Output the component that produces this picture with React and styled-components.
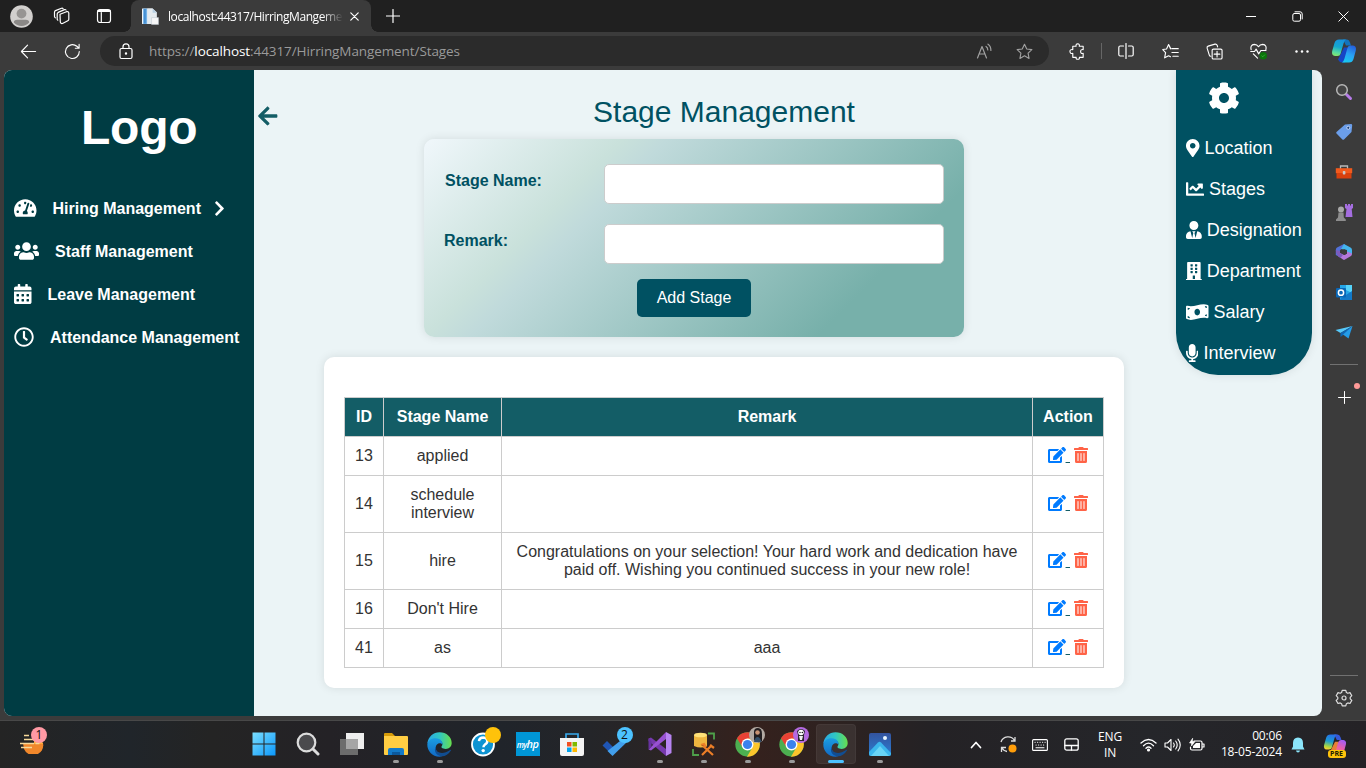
import React from "react";
import styled, { createGlobalStyle } from "styled-components";
import {
  FaTachometerAlt, FaUsers, FaCalendarAlt, FaRegClock, FaChevronRight, FaArrowLeft, FaCog,
  FaMapMarkerAlt, FaChartLine, FaUserTie, FaBuilding, FaMoneyBillWave, FaMicrophone, FaEdit, FaTrashAlt,
} from "react-icons/fa";

const Global = createGlobalStyle`
  * { box-sizing: border-box; }
  body { margin: 0; background: #3b3b3b; overflow: hidden; font-family: "Liberation Sans", Arial, sans-serif; }
  svg { display: block; flex: none; }
`;

const UI_FONT = `"Open Sans", "Noto Sans", sans-serif`;

const Screen = styled.div`
  width: 1366px; height: 768px; display: flex; flex-direction: column; background: #3b3b3b; overflow: hidden;
`;

/* ---------- browser chrome ---------- */
const TabStrip = styled.header`
  height: 32px; background: #202020; display: flex; align-items: stretch; color: #fff; font-family: ${UI_FONT};
`;
const Slot = styled.div`
  width: ${(p) => p.$w}px; flex: none; display: flex; align-items: center; justify-content: center;
`;
const Tab = styled.div`
  width: 240px; background: #3b3b3b; border-radius: 8px 8px 0 0; display: flex; align-items: center;
  padding-left: 11px; position: relative;
  &::before, &::after {
    content: ""; position: absolute; bottom: 0; width: 7px; height: 7px;
  }
  &::before { left: -7px; background: radial-gradient(circle at 0 0, transparent 6.5px, #3b3b3b 7px); }
  &::after { right: -7px; background: radial-gradient(circle at 100% 0, transparent 6.5px, #3b3b3b 7px); }
`;
const TabTitle = styled.span`
  width: 176px; margin-left: 9px; margin-right: -3px; font-size: 12px; letter-spacing: -0.42px; white-space: nowrap;
  mask-image: linear-gradient(90deg, #000 154px, transparent 175px);
`;
const Spacer = styled.div`flex: 1;`;
const Toolbar = styled.div`
  height: 38px; background: #3b3b3b; display: flex; align-items: center; color: #fff; flex: none;
`;
const AddressBar = styled.div`
  width: 949px; height: 30px; border-radius: 15px; background: #2b2b2b; display: flex; align-items: center;
  margin-left: 6px; padding: 0 5px 0 6px; font-family: ${UI_FONT};
`;
const Url = styled.span`
  margin-left: 3px; font-size: 13.5px; letter-spacing: -0.09px; color: #9a9a9a; white-space: nowrap;
  b { font-weight: 400; color: #fff; }
`;
const Divider = styled.div`
  width: 1px; height: 16px; background: #666; margin: 0 1px 0 2px;
`;

/* ---------- page ---------- */
const Body = styled.div`
  height: 646px; display: flex; padding-left: 4px; flex: none;
`;
const Page = styled.div`
  width: 1318px; height: 646px; border-radius: 8px; overflow: hidden; background: #ebf4f6; display: flex;
`;
/* Font Awesome glyph drawn at its natural aspect ratio */
const Glyph = styled.i`
  display: ${(p) => (p.$inline ? "inline-block" : "block")}; flex: none;
  width: ${(p) => p.$w}px; height: ${(p) => p.$h}px; color: ${(p) => p.$c || "inherit"};
  vertical-align: -2px; margin-bottom: ${(p) => p.$lift || 0}px;
  svg { width: 100%; height: 100%; }
`;
const SideNav = styled.nav`
  width: 250px; background: #003c43; color: #fff; flex: none;
`;
const Logo = styled.div`
  font-size: 48px; font-weight: 700; line-height: 55px; padding: 30px 0 0 77px; height: 117px; letter-spacing: -0.2px;
`;
const NavItem = styled.a`
  display: flex; align-items: center; height: 43px; padding-left: 10px; font-size: 16px; font-weight: 700; white-space: nowrap;
  span { margin: 0 13px 0 16px; }
`;
const Main = styled.main`
  flex: 1; display: flex; align-items: flex-start;
`;
const Back = styled.div`
  width: 70px; padding: 35px 0 0 4px; color: #135d66; flex: none;
`;
const Content = styled.section`
  width: 800px; display: flex; flex-direction: column; align-items: center;
`;
const Title = styled.h2`
  margin: 24px 0 10px; font-size: 30px; line-height: 35px; font-weight: 400; color: #005162;
`;
const Form = styled.form`
  width: 540px; height: 198px; padding: 25px 20px 0; border-radius: 10px; margin-left: -60px;
  background: linear-gradient(135deg, #f0f7fb 0%, #c9e1db 27%, #c0dadb 33%, #77b0aa 80%);
  box-shadow: 0 0 10px rgba(0, 0, 0, 0.1);
`;
const Field = styled.label`
  display: flex; justify-content: space-between; height: 40px; margin-bottom: 20px;
  font-size: 16px; font-weight: 700; line-height: 18px; color: #005162;
  span { padding-top: 8px; padding-left: ${(p) => p.$indent}px; }
`;
const Input = styled.input`
  width: 340px; height: 40px; border: 1px solid #ccc; border-radius: 5px; background: #fff; padding: 10px;
`;
const Submit = styled.button`
  display: block; margin: -5px auto 0; width: 114px; height: 38px; border: 0; border-radius: 5px; background: #005162;
  color: #fff; font: 16px "Liberation Sans", Arial, sans-serif;
`;
const Card = styled.div`
  width: 800px; height: 331px; margin-top: 20px; padding: 40px 20px 20px; background: #fff; border-radius: 10px;
  box-shadow: 0 0 10px rgba(0, 0, 0, 0.1);
`;
const Table = styled.table`
  width: 760px; table-layout: fixed; border-collapse: collapse; font-size: 16px; line-height: 18px; color: #333; text-align: center;
  th, td { border: 1px solid #ccc; padding: 10px; }
  th { background: #135d66; color: #fff; white-space: nowrap; }
  th:last-child, td:last-child { padding: 10px 0; }
`;
const Actions = styled.span`
  color: #135d66; white-space: nowrap;
`;
const QuickMenu = styled.aside`
  width: 136px; height: 305px; margin-left: 52px; background: #005162; border-radius: 0 0 42px 42px;
  box-shadow: 0 0 10px rgba(0, 0, 0, 0.1); color: #fff; padding: 12px 0 0 10px;
`;
const GearBox = styled.div`
  height: 46px; padding-left: 22px;
`;
const QuickItem = styled.a`
  display: flex; align-items: center; gap: 5px; height: 41px; font-size: 18px; white-space: nowrap;
`;
const EdgeBar = styled.aside`
  width: 44px; display: flex; flex-direction: column; align-items: center; padding-top: 2px;
`;
const EdgeSlot = styled.div`
  height: ${(p) => p.$h || 40}px; width: 44px; flex: none; display: flex; align-items: center; justify-content: center; position: relative;
`;
const EdgeLine = styled.div`
  width: 28px; height: 1px; flex: none; background: #717171; margin-top: ${(p) => p.$mt}px;
`;
const PinkDot = styled.i`
  position: absolute; right: 6px; top: 18px; width: 6px; height: 6px; border-radius: 50%; background: #ff9a98;
`;

/* ---------- taskbar ---------- */
const Taskbar = styled.footer`
  height: 48px; margin-top: 4px; border-top: 1px solid #484848; display: flex; color: #fff; flex: none; font-family: ${UI_FONT};
  background: linear-gradient(90deg, #242424 0, #20252a 130px, #242424 210px, #242226 330px, #20242a 500px, #242529 590px, #2c2423 680px, #35211d 750px, #2e2220 830px, #242225 930px, #25262a 1150px, #242226 100%);
`;
const Widgets = styled.div`
  width: 241.500px; padding-left: 10px; flex: none;
`;
const TaskItem = styled.div`
  width: 44px; height: 46px; flex: none; display: flex; align-items: center; justify-content: center; position: relative;
  &::before {
    content: ""; position: absolute; inset: 3px 2px; border-radius: 4px;
    background: ${(p) => (p.$active ? "rgba(255,255,255,.07)" : "transparent")};
    border: 1px solid ${(p) => (p.$active ? "rgba(255,255,255,.04)" : "transparent")};
  }
  &::after {
    content: ""; position: absolute; bottom: 4px; height: 3px; border-radius: 2px;
    width: ${(p) => (p.$active ? 16 : p.$open ? 6 : 0)}px; background: ${(p) => (p.$active ? "#4cc2ff" : "#9a9a9a")};
  }
  svg { position: relative; }
`;
const Badge = styled.span`
  position: absolute; right: ${(p) => p.$r}px; top: ${(p) => p.$t || 6}px; width: 16px; height: 16px; border-radius: 50%;
  background: ${(p) => p.$bg}; color: #111; font-size: 12px; line-height: 16px; text-align: center;
`;
const HpTile = styled.div`
  width: 24px; height: 24px; background: #0096d6; color: #fff; font: italic 600 8px/23px "Open Sans", sans-serif;
  letter-spacing: -0.6px; text-align: center; position: relative;
  b { font-size: 11px; font-weight: 600; }
`;
const Lang = styled.div`
  width: 46px; text-align: center; font-size: 12px; line-height: 16px; padding-top: 8px; letter-spacing: -0.2px; flex: none;
`;
const Clock = styled.div`
  width: 71px; text-align: right; font-size: 12px; line-height: 16px; padding-top: 7px; letter-spacing: -0.15px; white-space: nowrap; flex: none;
`;
const PreTag = styled.span`
  position: absolute; left: 15px; top: 28px; width: 18px; height: 8px; border-radius: 3px; background: #ffc30b; color: #221a00;
  font: 700 7px/8px "Open Sans", sans-serif; text-align: center;
`;

const Line = ({ w = 18, h = w, vb = "0 0 18 18", c = "#fff", sw = 1.2, children }) => (
  <svg width={w} height={h} viewBox={vb} fill="none" stroke={c} strokeWidth={sw} strokeLinecap="round" strokeLinejoin="round">{children}</svg>
);

const Avatar = () => (
  <svg width="23" height="23" viewBox="0 0 23 23"><circle cx="11.5" cy="11.5" r="11.3" fill="#d2d0ce" /><circle cx="11.5" cy="8.6" r="4.9" fill="#979593" /><path d="M3.8 17.5q0-2.7 3.5-2.7h8.400q3.500 0 3.500 2.700a10.300 10.300 0 0 1-15.400 0z" fill="#8a8886" /></svg>
);
const Workspaces = () => (
  <Line><path d="M7 7.300 13.500 4.700Q15.500 4.200 15.800 6v6.200q0 1-1 1.500L9.500 16.500Q7.600 16.900 7.300 15z M4.800 13.200Q4 12.700 4.200 11.700V7q.1-1.100 1-1.600L11.500 2.600q1-.3 1.500.4 M2.300 10.800Q1.200 10 1.500 9V5.200q.1-1.100 1-1.600L8.500 1.200q1-.3 1.500.3" /></Line>
);
const TabActions = () => (
  <Line w={16} vb="0 0 16 16"><rect x="1.500" y="1.500" width="13" height="13" rx="2.500" /><path d="M2.300 3h11.400" strokeWidth="2.200" /><path d="M5.300 4.500v10" /></Line>
);
const Favicon = () => (
  <svg width="17" height="17" viewBox="0 0 16 16"><path d="M0 .5h10v14.500H0z" fill="#f1f5f8" /><path d="M1 .5h4v14.500H1z" fill="#74b2e6" /><path d="M2 1h1.500v13.500H2z" fill="#3f8bd0" /><path d="M5 .5h5l4 3.500v11H5z" fill="#e4eaee" /><path d="M10 .5l4 4h-4z" fill="#b7cfe2" /><path d="M9 9h6.500v6.500H9z" fill="#f6f6f6" stroke="#bcc6ce" strokeWidth=".5" /></svg>
);
const CopilotMark = ({ s = 26, id = "cp", warm }) => (
  <svg width={s} height={s} viewBox="0 0 26 26">
    <defs>
      <linearGradient id={id + "a"} x1=".5" y1="0" x2=".3" y2="1"><stop offset="0" stopColor={warm ? "#2870ea" : "#1794de"} /><stop offset=".45" stopColor={warm ? "#1b9bd0" : "#15a8cf"} /><stop offset=".8" stopColor={warm ? "#a6d643" : "#58dda0"} /><stop offset="1" stopColor={warm ? "#ffd02e" : "#85e56c"} /></linearGradient>
      <linearGradient id={id + "b"} x1=".7" y1="0" x2=".3" y2="1"><stop offset="0" stopColor={warm ? "#a35cf5" : "#2461dc"} /><stop offset=".5" stopColor={warm ? "#eb5fa8" : "#2aa2f4"} /><stop offset="1" stopColor={warm ? "#ff8b56" : "#18c9ef"} /></linearGradient>
    </defs>
    <path d="M7 21.500q1.500 3 4 3h3l3-15H13z" fill={warm ? "#e88134" : "#1646c5"} />
    <path d="M12 1.500h4q2 0 3 3l1 3h-5z" fill={warm ? "#3658d8" : "#1273bd"} />
    <path d="M8 1.500h7q-1.700 1-2.500 4L9.700 15.500Q9 18 6.500 18H4Q.2 17.500 1.200 13L3.500 5Q4.500 1.500 8 1.500z" fill={`url(#${id}a)`} />
    <path d="M18 24.500h-7q1.700-1 2.500-4l2.800-10Q17 7.500 19.500 7.500H22q3.800.5 2.800 5L22.500 21q-1 3.500-4.500 3.500z" fill={`url(#${id}b)`} />
  </svg>
);
const EdgeLogo = ({ id }) => (
  <svg width="25" height="25" viewBox="0 0 24 24">
    <defs>
      <linearGradient id={id + "1"} x1="0" y1=".4" x2="1" y2=".4"><stop offset="0" stopColor="#2aa8e8" /><stop offset=".5" stopColor="#30c7c2" /><stop offset="1" stopColor="#68df4c" /></linearGradient>
      <linearGradient id={id + "2"} x1="0" y1="0" x2="0" y2="1"><stop offset="0" stopColor="#1b9de2" /><stop offset="1" stopColor="#1169c4" /></linearGradient>
    </defs>
    <path d="M.3 11C1.200 4.500 6 .3 12 .3c6.800 0 11.700 4.700 11.700 10.200 0 3.500-2.600 5.700-5.700 5.700-3.600 0-4.700-1.500-3.800-2.700 2-3-1-6.300-5-6.300-4.200 0-7.500 2-8.900 3.800z" fill={`url(#${id}1)`} />
    <path d="M.3 12C.5 8.500 4.500 5.800 8.500 6c4.500.1 7 3.400 6.200 6.300C13 9.600 8.400 10.900 8.400 15.200c0 4.800 3.800 8 8.200 7.200-1.400.9-3 1.300-4.600 1.300C5 23.700.1 18 .3 12z" fill={`url(#${id}2)`} />
    <path d="M8.600 13.500c-1.700 5.400 5.200 9.700 13.600 3.800.7-.5 1 0 .7.500-2.500 4.500-7 6.300-10.400 5.200C7.700 21.500 6.400 17 8.600 13.500z" fill="#114d91" />
  </svg>
);
const Chrome = () => (
  <svg width="25" height="25" viewBox="0 0 24 24"><circle cx="12" cy="12" r="11.700" fill="#4caf50" /><path d="M1.900 6.100A11.700 11.700 0 0 1 22.200 6.200L12 6.700 7.200 14.600z" fill="#e94235" /><path d="M22.200 6.200A11.700 11.700 0 0 1 11.500 23.700L16.800 14.600 12 6.300z" fill="#fcc52c" /><circle cx="12" cy="12" r="5.700" fill="#fff" /><circle cx="12" cy="12" r="4.400" fill="#3b82ee" /></svg>
);

const NAV = [
  [FaTachometerAlt, 22.5, "Hiring Management", true],
  [FaUsers, 25, "Staff Management"],
  [FaCalendarAlt, 17.5, "Leave Management"],
  [FaRegClock, 20, "Attendance Management"],
];
const QUICK = [
  [FaMapMarkerAlt, 13.5, "Location"], [FaChartLine, 18, "Stages"], [FaUserTie, 15.75, "Designation"],
  [FaBuilding, 15.75, "Department"], [FaMoneyBillWave, 22.5, "Salary"], [FaMicrophone, 12.4, "Interview"],
];
const ROWS = [
  ["13", "applied", ""],
  ["14", "schedule interview", ""],
  ["15", "hire", "Congratulations on your selection! Your hard work and dedication have paid off. Wishing you continued success in your new role!"],
  ["16", "Don't Hire", ""],
  ["41", "as", "aaa"],
];

const BrowserTop = () => (
  <>
    <TabStrip>
      <Slot $w={43}><Avatar /></Slot>
      <Slot $w={38}><Workspaces /></Slot>
      <Slot $w={46}><TabActions /></Slot>
      <Slot $w={4} />
      <Tab>
        <Favicon />
        <TabTitle>localhost:44317/HirringMangeme</TabTitle>
        <Slot $w={26}><Line w={9} vb="0 0 9 9"><path d="M.8.8l7.400 7.400M8.200.8.800 8.200" /></Line></Slot>
      </Tab>
      <Slot $w={43}><Line w={14} vb="0 0 14 14"><path d="M7 .5v13M.5 7h13" /></Line></Slot>
      <Spacer />
      <Slot $w={46}><Line w={10} vb="0 0 10 10" sw={1}><path d="M.3 5.500h9.400" /></Line></Slot>
      <Slot $w={46}><Line w={11} vb="0 0 11 11" sw={1}><rect x=".8" y="2.500" width="7.700" height="7.700" rx="1.500" /><path d="M3 .8h5q2.200 0 2.200 2.200v5" /></Line></Slot>
      <Slot $w={46}><Line w={11} vb="0 0 11 11" sw={1}><path d="M.8.8l9.400 9.400M10.200.8.800 10.200" /></Line></Slot>
    </TabStrip>
    <Toolbar>
      <Slot $w={6} />
      <Slot $w={44}><Line w={17}><path d="M16.500 9H1.500M8 2.200 1.500 9 8 15.800" /></Line></Slot>
      <Slot $w={44}><Line w={17}><path d="M16.200 9A7.300 7.300 0 1 1 13.600 3.500L16 5.500M16 1.500v4h-4" /></Line></Slot>
      <AddressBar>
        <Slot $w={40}><Line w={14} h={17} vb="0 0 14 17"><rect x="1" y="5.500" width="12" height="10" rx="1.500" /><path d="M4 5.500V3.800a3 3 0 0 1 6 0v1.700" /><circle cx="7" cy="10.500" r=".6" fill="#fff" /></Line></Slot>
        <Url>https://<b>localhost</b>:44317/HirringMangement/Stages</Url>
        <Spacer />
        <Slot $w={40}><Line w={17} c="#a0a0a0" vb="0 0 17 17"><path d="M1.500 15 6 3.500l4.500 11.500M3 11h6M10 3.500q1.800 1 1.800 3.500M12 1.200q3 2 2.900 6.300" /></Line></Slot>
        <Slot $w={40}><Line w={17} c="#a0a0a0"><path d="m9 1.300 2.400 5 5.400.7-4 3.800 1 5.500L9 13.600l-4.800 2.700 1-5.500-4-3.800 5.400-.7z" /></Line></Slot>
      </AddressBar>
      <Slot $w={6} />
      <Slot $w={44}><Line w={17}><path d="M5 3.500h2.500q-.5-2.500 1.700-2.700 2.300.2 1.700 2.700H15V7q-2.700-.5-2.700 2 0 2.600 2.700 2v4.200h-4q.4 2-1.700 2-2.200 0-1.700-2H4V11Q1.200 11.600 1 9q0-2.500 3-2V3.500z" /></Line></Slot>
      <Divider />
      <Slot $w={45}><Line w={16} vb="0 0 16 16"><path d="M8 .5v15M5.500 3H2.200Q.8 3 .8 4.500v7q0 1.500 1.400 1.500h3.300M10.500 3h3.300q1.400 0 1.400 1.500v7q0 1.500-1.400 1.500h-3.300" /></Line></Slot>
      <Slot $w={44}><Line w={17}><path d="M9 6 7 1.700 4.800 6.300l-4 .6 3 3.300-1 5.500L7 13.500l2 1M10.500 6h6.700M10.500 10h6.700M11.500 14h5.700M7 1.700 9.300 6.200" /></Line></Slot>
      <Slot $w={44}><Line w={17}><path d="M5 14Q3.800 14 3.500 12.800L1.200 5.500Q.8 3.800 2.300 3.300L9.500 1.200q1.600-.4 2.300 1.200l.5 1.700M6.500 7.800q0-1.300 1.300-1.300h7.800q1.400 0 1.400 1.300v7.800q0 1.400-1.400 1.400H7.800q-1.300 0-1.300-1.400zM11.700 8.800v6M8.700 11.800h6" /></Line></Slot>
      <Slot $w={44}><Line w={17}><path d="M1.200 7Q0 2 4.500 1.500 7.500 1.500 9 4q1.500-2.500 4.500-2.500Q18 2 16.800 7M.8 9h4L6.500 6.500l2.700 5L11.500 8H17M3.500 11.500l4.500 4.500" /><circle cx="14" cy="13.500" r="4" fill="#0b750b" stroke="none" /><path d="m12.500 13.700 1 .9 2-2" stroke="#4fb64f" strokeWidth=".7" /></Line></Slot>
      <Slot $w={44}><svg width="14" height="3"><g fill="#fff"><circle cx="1.500" cy="1.500" r="1.200" /><circle cx="7" cy="1.500" r="1.200" /><circle cx="12.500" cy="1.500" r="1.200" /></g></svg></Slot>
      <Slot $w={40}><CopilotMark id="tb" /></Slot>
    </Toolbar>
  </>
);

const EdgeSidebar = () => (
  <EdgeBar>
    <EdgeSlot><svg width="18" height="18" viewBox="0 0 18 18"><path d="m11.500 11.500 4 4" stroke="#b67be8" strokeWidth="3" strokeLinecap="round" /><circle cx="7" cy="7" r="5.300" stroke="#b7b7b7" strokeWidth="1.500" fill="#444" /></svg></EdgeSlot>
    <EdgeSlot><svg width="18" height="18" viewBox="0 0 18 18"><path d="M10 1.500 16 1q1.200 0 1.200 1.200L16.500 9 9 16.400q-.8.8-1.600 0L1.500 10.500q-.7-.8 0-1.600z" fill="#6b9ee9" /><circle cx="13.300" cy="4.800" r="1.500" fill="#173c78" stroke="#dbe8ff" strokeWidth=".8" /></svg></EdgeSlot>
    <EdgeSlot><svg width="18" height="16" viewBox="0 0 18 16"><path d="M5.500 5V2h7v3" fill="none" stroke="#b9b9b9" strokeWidth="1.300" /><path d="M.8 4.200h16.400v5H.8z" fill="#f25a1d" /><path d="M1.500 9h15v5.500h-15z" fill="#d8400d" /><rect x="7.800" y="7" width="2.600" height="3.500" rx=".8" fill="#c9c9c9" /></svg></EdgeSlot>
    <EdgeSlot><svg width="18" height="19" viewBox="0 0 18 19"><path d="M10 1h2v1.500h1V1h2v1.500h1V1h2v4l-1.300 1 .8 8h-7l1-8L10 5z" fill="#a56ee0" /><circle cx="6" cy="6.500" r="3" fill="#a9a9a9" /><path d="M3.500 9.500h5l.3 5 2 2V18H1v-1.500l2-2z" fill="#8d8d8d" /></svg></EdgeSlot>
    <EdgeSlot><svg width="18" height="18" viewBox="0 0 18 18"><path d="M9 1 2 4.500Q.8 5.200.8 7v5l4 2V8q0-1 1-1.500L11 3z" fill="#5271d9" /><path d="M9 1l6.500 3.400Q17 5.300 17 7v4.500L12 9V7L6 6z" fill="#43b5ed" /><path d="m3 13 5 3.600q1 .6 2 0l6-3.600q1-.8 1-2.500L12 8.500v2L9.500 12 5 10z" fill="#b578da" /><path d="M.8 7q0 5 4.500 8L8 12 5 10V8z" fill="#7c5bbd" /><path d="M6.500 7.500 9.500 6.200 12 7.800v2.700L9.300 12 6.500 10.500z" fill="#3b3b3b" /></svg></EdgeSlot>
    <EdgeSlot><svg width="18" height="17" viewBox="0 0 18 17"><path d="M5 1h12v14H5z" fill="#24a6e8" /><path d="M11 1h6v8l-6-3z" fill="#55d3fa" /><path d="m5 15 12-8v9H5z" fill="#1279c8" /><rect x="1" y="4" width="10" height="9.500" rx="1" fill="#0967b7" /><circle cx="6" cy="8.700" r="2.600" stroke="#fff" strokeWidth="1.500" fill="none" /></svg></EdgeSlot>
    <EdgeSlot><svg width="18" height="15" viewBox="0 0 18 15"><path d="M17.500 1 .5 5l5 3z" fill="#56c9fa" /><path d="M17.500 1 5.500 8v4l3-2.300z" fill="#0f66b5" /><path d="M17.500 1 8 9.500l5.500 4z" fill="#249ce8" /></svg></EdgeSlot>
    <EdgeLine $mt={12} />
    <EdgeSlot $h={64}><Line w={13} vb="0 0 13 13" sw={1}><path d="M6.500.5v12M.5 6.500h12" /></Line><PinkDot /></EdgeSlot>
    <EdgeLine $mt={246} />
    <EdgeSlot $h={44}><Line w={18} c="#ddd"><path d="M7.200 1.300h3.600l.6 2.200 1.400.8 2.200-.7 1.800 3.100-1.600 1.600v1.500l1.600 1.600-1.800 3.100-2.200-.6-1.400.8-.6 2.100H7.200l-.6-2.100-1.400-.8-2.200.6-1.800-3.100 1.600-1.600V8.300L1.200 6.700 3 3.600l2.200.7 1.400-.8z" /><circle cx="9" cy="9" r="2" /></Line></EdgeSlot>
  </EdgeBar>
);

const WindowsTaskbar = () => (
  <Taskbar>
    <Widgets>
      <TaskItem>
        <svg width="24" height="20" viewBox="0 0 24 20"><path d="M3 9h20a10 10 0 0 1-19 6z" fill="#f0872b" /><path d="M14 5q8-1 9 5h-9z" fill="#ffad3b" /><g stroke="#f6d899" strokeWidth="1.600"><path d="M4 1.500h5M4 5.500h10M0 9.500h14M15.500 9.500h4M1 13.500h11" /></g></svg>
        <Badge $r={7} $t={6} $bg="#ff99a4">1</Badge>
      </TaskItem>
    </Widgets>
    <TaskItem><svg width="24" height="24" viewBox="0 0 24 24"><defs><linearGradient id="win" x1="0" y1="0" x2="1" y2="1"><stop stopColor="#7bdfff" /><stop offset="1" stopColor="#0b97fb" /></linearGradient></defs><path d="M.5.500h11v11H.5zM12.500.5h11v11h-11zM.5 12.500h11v11H.5zM12.500 12.500h11v11h-11z" fill="url(#win)" /></svg></TaskItem>
    <TaskItem><svg width="24" height="24" viewBox="0 0 24 24"><circle cx="10.500" cy="10.500" r="8.800" stroke="#dcdcdc" strokeWidth="2.200" fill="#4a4a4d" /><path d="m17 17 5 5" stroke="#ddd" strokeWidth="3" strokeLinecap="round" /></svg></TaskItem>
    <TaskItem><svg width="24" height="24" viewBox="0 0 24 24"><path d="M6 1h18v16H6z" fill="#eee" /><path d="M0 7h18v16H0z" fill="#6c6c6c" /><path d="M6 7h12v10H6z" fill="#a5a5a5" /></svg></TaskItem>
    <TaskItem $open><svg width="24" height="24" viewBox="0 0 24 24"><path d="M0 2q0-1 1-1h7l3 3H0z" fill="#d69b09" /><path d="M0 4h23q1 0 1 1v17q0 1-1 1H1q-1 0-1-1z" fill="#ffcd43" /><path d="M4 23v-5q0-2 2-2h12q2 0 2 2v5z" fill="#137ac9" /><path d="M8 20h8v3H8z" fill="#0c599d" /></svg></TaskItem>
    <TaskItem $open><EdgeLogo id="e1" /></TaskItem>
    <TaskItem><svg width="25" height="25" viewBox="0 0 25 25"><circle cx="12" cy="12.500" r="11" fill="#0d93d2" stroke="#fff" strokeWidth="1.800" /><path d="M8 9.200q.3-3.700 4.300-3.700 4 .2 4 3.600 0 2.300-2.500 3.600-1.300.8-1.300 2.500" fill="none" stroke="#fff" strokeWidth="2.500" /><circle cx="12.200" cy="18.600" r="1.700" fill="#fff" /></svg><Badge $r={5} $bg="#ffc20a" /></TaskItem>
    <TaskItem><HpTile>my<b>hp</b></HpTile></TaskItem>
    <TaskItem><svg width="24" height="25" viewBox="0 0 24 25"><path d="M6 6V2h12v4" fill="none" stroke="#39a9eb" strokeWidth="1.700" /><path d="M0 6h24v16q0 2-2 2H2q-2 0-2-2z" fill="#f4f4f4" /><path d="M7 10h4.500v4.500H7z" fill="#f25022" /><path d="M12.500 10H17v4.500h-4.500z" fill="#7fba00" /><path d="M7 15.500h4.500V20H7z" fill="#00a4ef" /><path d="M12.500 15.500H17V20h-4.500z" fill="#ffb900" /></svg></TaskItem>
    <TaskItem><svg width="28" height="26" viewBox="0 0 28 26"><path d="m5 10 8.500 8.500-4.500 4.300-8.500-8.300z" fill="#1f55b5" /><path d="m23 6 4 3L10.500 25 5.500 20z" fill="#429fec" /></svg><Badge $r={5} $bg="#4cc2ff">2</Badge></TaskItem>
    <TaskItem $open><svg width="24" height="24" viewBox="0 0 24 24"><path d="m.5 6.500 2.500-1L18 17v7L.5 9z" fill="#7639ad" /><path d="M.5 17.500 18 0v7L3 18.500z" fill="#9851d2" /><path d="M.5 6.500v11l3-2.500V9z" fill="#6732a0" /><path d="M18 0l5.500 3v18L18 24z" fill="#b784f2" /></svg></TaskItem>
    <TaskItem $open><svg width="24" height="24" viewBox="0 0 24 24"><path d="M2 3h13v11q-6 3-13 0z" fill="#eeb640" /><ellipse cx="8.500" cy="3" rx="6.500" ry="2.300" fill="#ffe178" /><path d="M16 1.500h6v6M1 17v6h6" fill="none" stroke="#4ea14a" strokeWidth="1.800" /><path d="m11 14 10 9M20 13 10 23M9 13l3-1 2 3M18 13l4 3" stroke="#ec7e27" strokeWidth="2.200" /></svg></TaskItem>
    <TaskItem $open><Chrome /><Badge $r={5} $bg="#b3aaa3"><svg width="16" height="16" viewBox="0 0 16 16"><path d="M5 13V5q0-4 4-4t4 6v7q-4 3-8-1z" fill="#221e20" /><circle cx="8.500" cy="5.500" r="2.300" fill="#c99474" /><path d="M5 15q1-5 3.500-5t4 5z" fill="#35506a" /></svg></Badge></TaskItem>
    <TaskItem $open><Chrome /><Badge $r={5} $bg="#b46ae0"><svg width="16" height="16" viewBox="0 0 16 16"><path d="M5 14V8L4 4q4-4 8 0l-1 4v6z" fill="#2a2630" /><circle cx="8" cy="5.500" r="2.800" fill="#fff" /><circle cx="7" cy="5.500" r=".7" /><circle cx="9.300" cy="5.500" r=".7" /><path d="M6 9h4l-1 4H7z" fill="#eee" /></svg></Badge></TaskItem>
    <TaskItem $active><EdgeLogo id="e2" /></TaskItem>
    <TaskItem $open><svg width="22" height="23" viewBox="0 0 22 23"><defs><linearGradient id="ph" x1="0" y1="0" x2="0" y2="1"><stop stopColor="#33539e" /><stop offset="1" stopColor="#2b7ed3" /></linearGradient></defs><rect width="22" height="23" rx="2" fill="url(#ph)" /><path d="M0 19 9 9.500q1.500-1.500 3 0L22 20v1q0 2-2 2H2q-2 0-2-2z" fill="#3bb6ec" /><path d="M2 23 11 13l9 10z" fill="#69d4f5" /><circle cx="16" cy="5" r="2" fill="#e8f5ff" /></svg></TaskItem>
    <Spacer />
    <Slot $w={32}><Line w={12} h={8} vb="0 0 12 8" sw={1.7}><path d="m1.500 6.500 4.500-5 4.500 5" /></Line></Slot>
    <Slot $w={32}><svg width="17" height="17" viewBox="0 0 17 17" fill="none" stroke="#ddd" strokeWidth="1.300"><path d="M1 6a7.500 7.500 0 0 1 13.500-1.500M15 1v4h-4M7 15.500Q3.500 15 1.700 11.500M1.500 16v-4.500H6" /><circle cx="12.500" cy="12.500" r="4" fill="#ff9e0a" stroke="none" /></svg></Slot>
    <Slot $w={32}><Line w={16} h={12} vb="0 0 16 12" sw={1.1}><rect x=".6" y=".6" width="14.800" height="10.800" rx="1" /><path d="M3 3.200h.2M5.500 3.200h.2M8 3.200h.2M10.500 3.200h.2M13 3.200h.2M4 6h.2M6.500 6h.2M9 6h.2M11.500 6h.2M4 8.800h8" /></Line></Slot>
    <Slot $w={31}><Line w={15} h={13} vb="0 0 15 13" sw={1.3}><rect x=".8" y=".8" width="13.400" height="11.400" rx="2" /><path d="M1 7.500h13M7.500 7.500V12" /></Line></Slot>
    <Lang>ENG<br />IN</Lang>
    <Slot $w={30}><Line w={17} h={14} vb="0 0 17 14" sw={1.3}><path d="M1 5q7.500-7 15 0M3.500 7.700q5-5 10 0M6 10.200q2.500-2.500 5 0" /><circle cx="8.500" cy="12" r=".9" fill="#fff" /></Line></Slot>
    <Slot $w={18}><Line w={17} h={14} vb="0 0 17 14" sw={1.1}><path d="M1 5h2.500L7 1.500v11L3.500 9H1zM9.500 5q1.500 2 0 4M11.700 3q3 4 0 8M14 1.200q4.500 5.800 0 11.600" /></Line></Slot>
    <Slot $w={30}><Line w={17} h={14} vb="0 0 17 14" sw={1.2}><path d="M6 3h6.500Q14 3 14 4.500v6q0 1.500-1.500 1.500H4q-1.500 0-1.500-1.500V9M14.500 6H16v3h-1.500" /><path d="M8 5h4v5H5V8z" fill="#fff" stroke="none" /><path d="M4.500.5 1.500 5h2v3L7 3.500H4.500z" fill="#fff" strokeWidth=".6" /></Line></Slot>
    <Clock>00:06<br />18-05-2024</Clock>
    <Slot $w={31}><svg width="14" height="16" viewBox="0 0 14 16"><path d="M7 .5q5 .3 5 5.500v3.500l1.500 3H.5l1.500-3V6Q2 .8 7 .5zM5 13.500h4Q8.700 15.500 7 15.500T5 13.500z" fill="#8be5fb" /></svg></Slot>
    <Slot $w={43}><TaskItem><CopilotMark s={24} id="pre" warm /><PreTag>PRE</PreTag></TaskItem></Slot>
    <Slot $w={10} />
  </Taskbar>
);

export default function App() {
  return (
    <Screen>
      <Global />
      <BrowserTop />
      <Body>
        <Page>
          <SideNav>
            <Logo>Logo</Logo>
            {NAV.map(([Icon, w, label, more]) => (
              <NavItem key={label}>
                <Glyph $w={w} $h={20} $lift={2}><Icon /></Glyph>
                <span>{label}</span>
                {more && <Glyph $w={11} $h={17}><FaChevronRight /></Glyph>}
              </NavItem>
            ))}
          </SideNav>
          <Main>
            <Back><Glyph $w={19.5} $h={22}><FaArrowLeft /></Glyph></Back>
            <Content>
              <Title>Stage Management</Title>
              <Form>
                <Field $indent={1}><span>Stage Name:</span><Input /></Field>
                <Field $indent={0}><span>Remark:</span><Input /></Field>
                <Submit type="button">Add Stage</Submit>
              </Form>
              <Card>
                <Table>
                  <colgroup><col width="39" /><col width="118" /><col width="531" /><col width="71" /></colgroup>
                  <thead><tr><th>ID</th><th>Stage Name</th><th>Remark</th><th>Action</th></tr></thead>
                  <tbody>
                    {ROWS.map(([id, name, remark]) => (
                      <tr key={id}>
                        <td>{id}</td><td>{name}</td><td>{remark}</td>
                        <td>
                          <Actions>
                            <Glyph $inline $w={18} $h={16} $c="#007bff"><FaEdit /></Glyph><u>&nbsp;</u>{" "}
                            <Glyph $inline $w={14} $h={16} $c="#ff6347"><FaTrashAlt /></Glyph>
                          </Actions>
                        </td>
                      </tr>
                    ))}
                  </tbody>
                </Table>
              </Card>
            </Content>
            <QuickMenu>
              <GearBox><Glyph $w={32} $h={32}><FaCog /></Glyph></GearBox>
              {QUICK.map(([Icon, w, label]) => (
                <QuickItem key={label}><Glyph $w={w} $h={18} $lift={2}><Icon /></Glyph>{label}</QuickItem>
              ))}
            </QuickMenu>
          </Main>
        </Page>
        <EdgeSidebar />
      </Body>
      <WindowsTaskbar />
    </Screen>
  );
}
